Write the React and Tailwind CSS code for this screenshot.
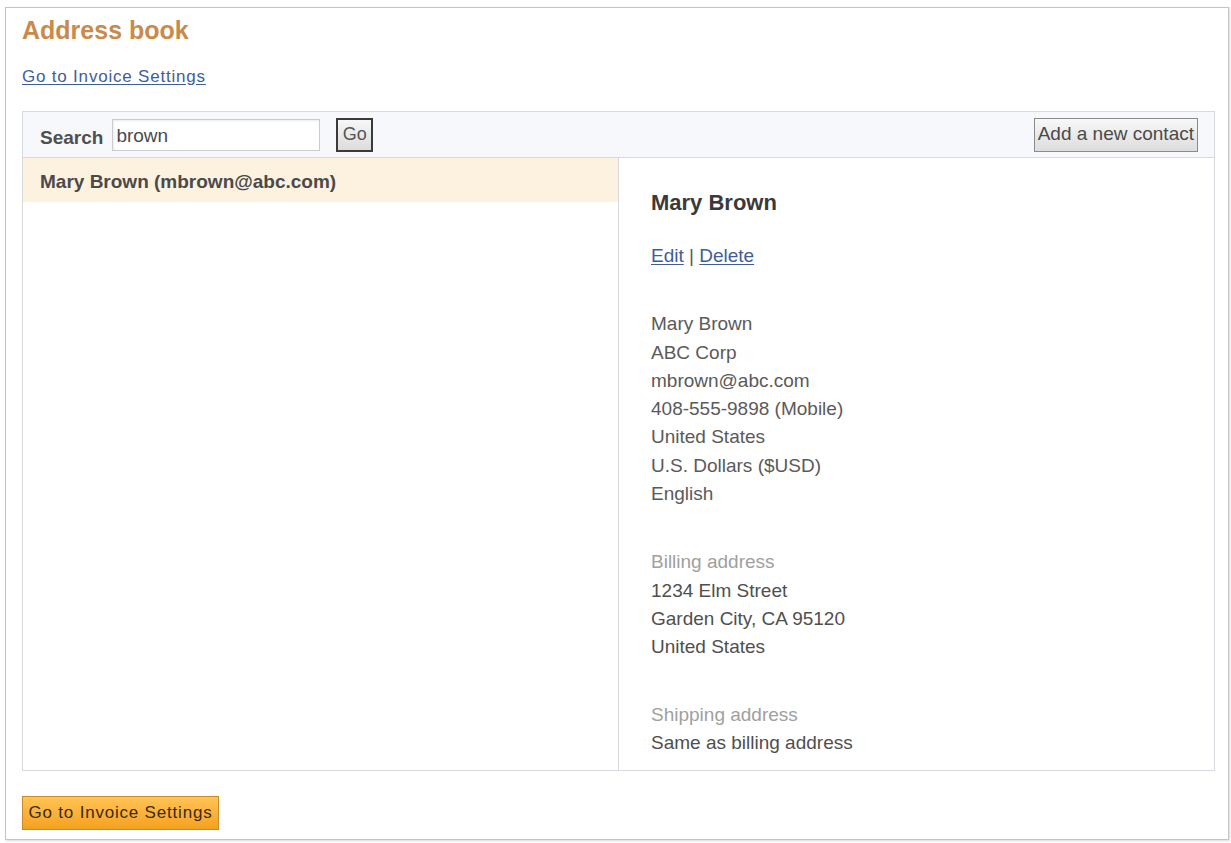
const contact = {
  name: "Mary Brown",
  email: "mbrown@abc.com",
  details: [
    "Mary Brown",
    "ABC Corp",
    "mbrown@abc.com",
    "408-555-9898 (Mobile)",
    "United States",
    "U.S. Dollars ($USD)",
    "English",
  ],
  billing: ["1234 Elm Street", "Garden City, CA 95120", "United States"],
  shipping: ["Same as billing address"],
};

export default function App() {
  return (
    <div className="min-h-[843px] bg-white pl-[5px] pt-[7px] font-['Liberation_Sans',Arial,sans-serif]">
      <div className="flex h-[833px] w-[1224px] flex-col border border-[#c4c4c4] px-4 pt-2 shadow-[1px_1px_2px_rgba(0,0,0,0.15)]">
        <h1 className="text-[25px] font-bold leading-[28px] text-[#c98a4b]">
          Address book
        </h1>
        <a
          href="#"
          className="mt-[23px] self-start text-[17px] leading-[20px] tracking-[0.8px] text-[#3f5d9b] underline underline-offset-2"
        >
          Go to Invoice Settings
        </a>

        <div className="mt-[24px] flex h-[660px] w-[1193px] flex-col border border-[#d6dade]">
          {/* toolbar */}
          <div className="flex h-[46px] items-center border-b border-[#d6dade] bg-[#f6f8fb] pl-[17px] pr-4">
            <span className="pt-[7px] text-[19px] font-bold text-[#4f4f4f]">Search</span>
            <input
              defaultValue="brown"
              className="ml-[9px] h-[32px] w-[208px] border border-[#c9cdd2] bg-white px-[3px] pt-[3px] text-[19px] text-[#4a4a4a] shadow-[inset_1px_1px_2px_rgba(0,0,0,0.08)] outline-none"
            />
            <button className="ml-4 h-[34px] w-[37px] border-2 border-[#3a3a3a] bg-gradient-to-b from-[#f7f7f7] to-[#dcdcdc] text-[18px] text-[#555]">
              Go
            </button>
            <button className="ml-auto h-[34px] border border-[#8a8a8a] bg-gradient-to-b from-[#f8f8f8] to-[#dddddd] px-[3px] text-[19px] text-[#4a4a4a]">
              Add a new contact
            </button>
          </div>

          <div className="flex flex-1">
            {/* contact list */}
            <div className="w-[596px] border-r border-[#d6dade]">
              <div className="flex h-[44px] items-center bg-[#fdf1df] pl-[17px] pt-[4px]">
                <span className="text-[19px] font-bold text-[#4a4a4a]">
                  {contact.name} ({contact.email})
                </span>
              </div>
            </div>

            {/* contact details */}
            <div className="flex-1 pl-[32px] pt-[31px] text-[19px] leading-[28.3px] text-[#5a5a5a]">
              <h2 className="text-[22px] font-bold leading-[28px] text-[#3a3a3a]">
                {contact.name}
              </h2>
              <p className="mt-[25px]">
                <a href="#" className="text-[#3f5d9b] underline underline-offset-2">
                  Edit
                </a>{" "}
                |{" "}
                <a href="#" className="text-[#3f5d9b] underline underline-offset-2">
                  Delete
                </a>
              </p>

              <div className="mt-[40px]">
                {contact.details.map((line) => (
                  <div key={line}>{line}</div>
                ))}
              </div>

              <div className="mt-[40px]">
                <div className="text-[#a0a0a0]">Billing address</div>
                {contact.billing.map((line) => (
                  <div key={line} className="text-[#4f4f4f]">
                    {line}
                  </div>
                ))}
              </div>

              <div className="mt-[39px]">
                <div className="text-[#a0a0a0]">Shipping address</div>
                {contact.shipping.map((line) => (
                  <div key={line} className="text-[#4f4f4f]">
                    {line}
                  </div>
                ))}
              </div>
            </div>
          </div>
        </div>

        <button className="mt-[25px] h-[34px] w-[197px] self-start border border-[#c98a2a] bg-gradient-to-b from-[#ffc453] to-[#f5a11c] text-[17px] tracking-[0.8px] text-[#3b2a12]">
          Go to Invoice Settings
        </button>
      </div>
    </div>
  );
}
